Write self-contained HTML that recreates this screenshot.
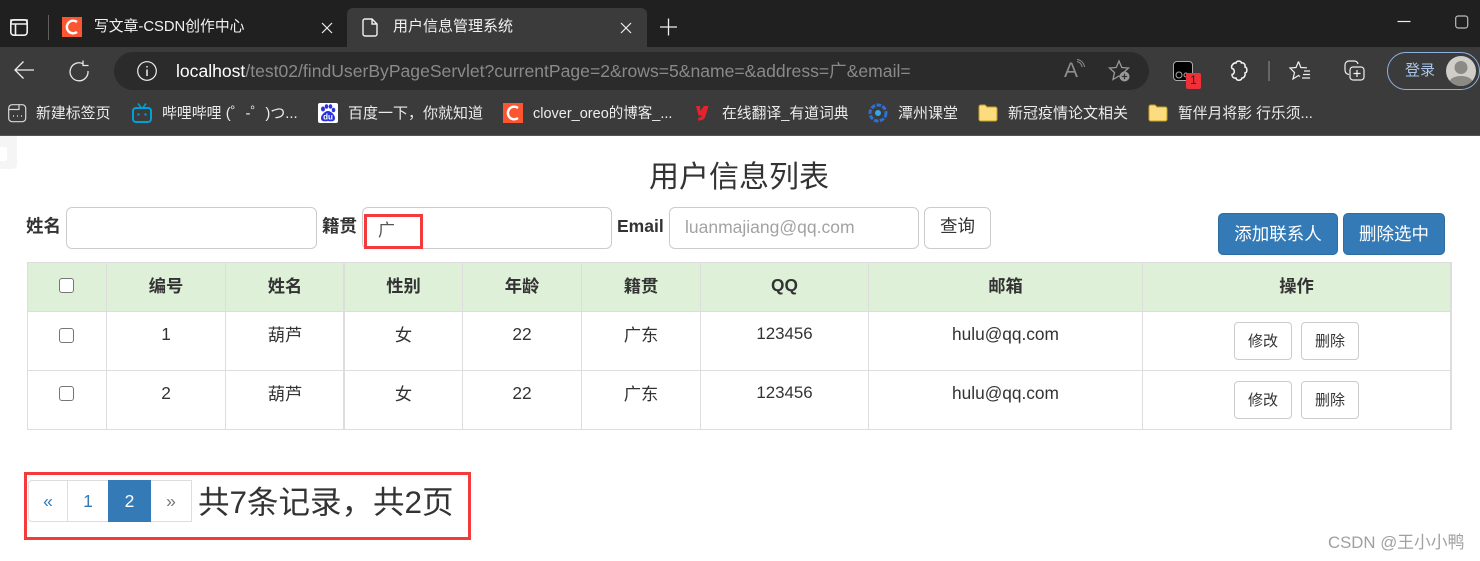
<!DOCTYPE html>
<html lang="zh-CN">
<head>
<meta charset="utf-8">
<title>用户信息管理系统</title>
<style>
*{box-sizing:border-box;margin:0;padding:0}
html,body{width:1480px;height:561px;overflow:hidden;background:#fff}
body{position:relative;font-family:"Liberation Sans","Noto Sans CJK SC",sans-serif;color:#333}
.a{position:absolute;white-space:nowrap}
.wt{color:#f2f2f2;font-size:14.8px;line-height:20px}
.bm{color:#ececec;font-size:14.9px;line-height:20px;top:104px}
svg{position:absolute;overflow:visible}
.box{position:absolute;border:1px solid #ccc;border-radius:6px;background:#fff}
.ln{position:absolute;background:#ddd}
.c{position:absolute;text-align:center;white-space:nowrap;font-size:17.3px;line-height:22px}
.th{font-weight:bold;top:275px}
.r1{top:324px}
.r2{top:383px}
.l{margin-top:-1px}
.cb{position:absolute;width:15px;height:15px;border:1px solid #767676;border-radius:3px;background:#fff;left:59px}
.sbtn{position:absolute;width:58px;height:38px;border:1px solid #ccc;border-radius:4px;background:#fff;font-size:15px;line-height:37px;text-align:center;color:#333}
.pbtn{position:absolute;height:42px;background:#fff;border:1px solid #ddd;text-align:center;line-height:41px;font-size:17.5px;color:#337ab7;top:480px}
</style>
</head>
<body>
<!-- chrome -->
<div class="a" style="left:0;top:0;width:1480px;height:136px;background:#3b3b3b"></div>
<div class="a" style="left:0;top:0;width:1480px;height:47px;background:#202020"></div>
<div class="a" style="left:347px;top:8px;width:300px;height:39px;background:#3b3b3b;border-radius:6px 6px 0 0"></div>
<div class="a" style="left:114px;top:52px;width:1035px;height:38px;background:#2b2b2b;border-radius:19px"></div>
<div class="a" style="left:0;top:135px;width:1480px;height:1px;background:#555"></div>

<svg style="left:0;top:0" width="60" height="47" fill="none" stroke="#f0f0f0">
<rect x="10.800" y="19.800" width="16.400" height="15.400" rx="3" stroke-width="1.600"/>
<path d="M11 24H27V20H11ZM15.500 24V35" stroke-width="1.600"/>
<path d="M48.500 15V40" stroke="#5f5f5f" stroke-width="1"/>
</svg>
<div class="a" style="left:62px;top:17px;width:20px;height:20px;background:#fc5531"></div>
<svg style="left:62px;top:17px" width="20" height="20" fill="none"><path d="M15 5A6.300 6.300 0 1 0 15 15" stroke="#fff" stroke-width="2.400"/></svg>
<div class="a wt" style="left:94px;top:17px">写文章-CSDN创作中心</div>
<svg style="left:322px;top:23px" width="11" height="11" stroke="#eee" stroke-width="1.200"><path d="M0 0L10 10M10 0L0 10"/></svg>
<svg style="left:362px;top:18px" width="16" height="19" fill="none" stroke="#f0f0f0" stroke-width="1.400"><path d="M2.500 1H10L15 6V16A2 2 0 0 1 13 18H3A2 2 0 0 1 1 16V3A2 2 0 0 1 2.500 1ZM10 1V6H15"/></svg>
<div class="a wt" style="left:393px;top:17px;font-size:15px">用户信息管理系统</div>
<svg style="left:621px;top:23px" width="11" height="11" stroke="#eee" stroke-width="1.200"><path d="M0 0L10 10M10 0L0 10"/></svg>
<svg style="left:660px;top:18px" width="18" height="18" stroke="#eee" stroke-width="1.300"><path d="M0 9H17M8.500 0.500V17.500"/></svg>

<svg style="left:1391px;top:15px" width="80" height="20" fill="none" stroke="#ddd"><path d="M6.500 6.500H19.500" stroke="#eee" stroke-width="1.200"/><rect x="64.700" y="1" width="12" height="12" rx="2.500" stroke-width="1.200" stroke="#bbb"/></svg>

<svg style="left:14px;top:60px" width="20" height="20" fill="none" stroke="#eee" stroke-width="1.300"><path d="M1 10H20M9.500 1.500L1 10L9.500 18.500"/></svg>
<svg style="left:69px;top:61px" width="20" height="20" fill="none" stroke="#e8e8e8" stroke-width="1.300"><path d="M14.500 3A9 9 0 1 0 19 10M14 -0.500V4.500H19.500"/></svg>
<svg style="left:137px;top:61px" width="20" height="20" fill="none" stroke="#eee" stroke-width="1.200"><circle cx="10" cy="10" r="9.300"/><path d="M10 8.500V15M10 5V6.500" stroke-width="1.500"/></svg>
<div class="a" style="left:176px;top:60px;font-size:17.57px;line-height:22px;color:#fff">localhost<span style="color:#8a8a8a">/test02/findUserByPageServlet?currentPage=2&amp;rows=5&amp;name=&amp;address=广&amp;email=</span></div>

<div class="a" style="left:1064px;top:60px;font-size:21px;line-height:22px;color:#8e8e8e">A</div>
<svg style="left:1076px;top:59px" width="10" height="12" fill="none" stroke="#8e8e8e" stroke-width="1"><path d="M1 2.500A6 6 0 0 1 6 8M1 0.500A8.500 8.500 0 0 1 8.500 8"/></svg>
<svg style="left:1108px;top:60px" width="24" height="22" fill="none"><path d="M11 1L13.800 7.500L20.500 8L15.500 12.500L17 19.500L11 16L5 19.500L6.500 12.500L1.500 8L8.200 7.500Z" stroke="#999" stroke-width="1.300"/><circle cx="16.500" cy="16.500" r="5" fill="#999"/><path d="M16.500 13.800V19.200M13.800 16.500H19.200" stroke="#333" stroke-width="1.200"/></svg>

<div class="a" style="left:1173px;top:61px;width:20px;height:20px;background:#000;border:1px solid #aaa;border-radius:4px"></div>
<svg style="left:1173px;top:61px" width="20" height="20" fill="none" stroke="#aaa"><circle cx="6" cy="14" r="3" stroke-width="1"/><circle cx="13" cy="14" r="2" stroke-width="1"/></svg>
<div class="a" style="left:1186px;top:73px;width:15px;height:16px;background:#ef3038;border-radius:2px;color:#222;font-size:11.500px;line-height:16px;text-align:center">1</div>
<svg style="left:1229px;top:60px" width="20" height="22" fill="none" stroke="#f4f4f4" stroke-width="1.500"><path d="M7 3C7.500 0.500 12 0.500 12.500 3C15 2.500 16.500 4.500 16 7C18.500 7.500 18.500 12.500 16 13C16.500 15 15.500 18 13 18C12 21 7.500 21 7 18C4.500 18.500 3 17 3 14.500C6 14 6 9 3 8.500C1.500 6 4.500 2.500 7 3Z"/></svg>
<div class="a" style="left:1268px;top:61px;width:2px;height:20px;background:#666"></div>
<svg style="left:1289px;top:60px" width="22" height="21" fill="none" stroke="#f0f0f0" stroke-width="1.200"><path d="M9.500 1.500L11.800 7.500L18 7.800M9.500 1.500L7 7.500L1 8L5.500 12.500L4 19L9.500 15.500L11 16.500M15 11H21M14 14.500H21M13 18H21"/></svg>
<svg style="left:1344px;top:60px" width="21" height="21" fill="none" stroke="#f0f0f0" stroke-width="1.200"><path d="M5 14.500C2 14 1 12 1 10V5C1 2.500 3 1 5 1H10C12 1 13.500 2 14 4"/><rect x="6" y="7" width="14" height="13" rx="3"/><path d="M13 10V17M9.500 13.500H16.500"/></svg>

<div class="a" style="left:1387px;top:52px;width:93px;height:38px;border:1.500px solid #8eb0dc;border-radius:19px"></div>
<div class="a" style="left:1405px;top:60px;font-size:15px;line-height:21px;color:#a9c5ea">登录</div>
<svg style="left:1446px;top:56px" width="30" height="30"><defs><clipPath id="av"><circle cx="15" cy="15" r="15"/></clipPath></defs><circle cx="15" cy="15" r="15" fill="#d0cec9"/><g clip-path="url(#av)" fill="#8c8a85"><circle cx="15" cy="11.500" r="6.500"/><ellipse cx="15" cy="27" rx="12" ry="7"/></g></svg>

<!-- bookmarks -->
<svg style="left:8px;top:104px" width="19" height="19" fill="none" stroke="#d8d8d8" stroke-width="1.200"><rect x=".7" y=".7" width="17" height="17" rx="3.500"/><path d="M1 5.500H11V1"/><path d="M5 12H6M9 12H10M13 12H14" stroke-width="1.600"/></svg>
<div class="a bm" style="left:36px">新建标签页</div>
<svg style="left:132px;top:103px" width="20" height="20" fill="none" stroke="#00a1d6" stroke-width="2"><rect x="1" y="5" width="18" height="14" rx="3"/><path d="M6 .500L9 4.500M14 .500L11 4.500" stroke-width="1.500"/><path d="M6.500 10.500V12.500M13.500 10.500V12.500" stroke-width="2"/></svg>
<div class="a bm" style="left:162px">哔哩哔哩 (゜-゜)つ...</div>
<div class="a" style="left:318px;top:103px;width:20px;height:20px;background:#fff;border-radius:2px"></div>
<svg style="left:318px;top:103px" width="20" height="20" fill="#2932e1"><ellipse cx="5" cy="6" rx="2" ry="2.500"/><ellipse cx="8.500" cy="3.500" rx="1.800" ry="2.300"/><ellipse cx="12.500" cy="3.500" rx="1.800" ry="2.300"/><ellipse cx="15.500" cy="7" rx="1.800" ry="2.300"/><path d="M10 8C7 8 3 12 3 15C3 19 7 18.500 10 18C13 18.500 17 19 17 15C17 12 13 8 10 8Z"/><text x="10" y="16.500" text-anchor="middle" font-size="8" font-weight="bold" fill="#fff">du</text></svg>
<div class="a bm" style="left:348px;font-size:15px">百度一下，你就知道</div>
<div class="a" style="left:503px;top:103px;width:20px;height:20px;background:#fc5531"></div>
<svg style="left:503px;top:103px" width="20" height="20" fill="none"><path d="M15 5A6.300 6.300 0 1 0 15 15" stroke="#fff" stroke-width="2.400"/></svg>
<div class="a bm" style="left:533px;font-size:14.5px">clover_oreo的博客_...</div>
<svg style="left:695px;top:105px" width="14" height="16" fill="#e8222d"><path d="M1 1H5L5.500 6L9 1H13.500L10.500 11C9.500 14.500 7 15.500 3 15.500L3.500 12.500C5.500 12.500 6.500 12 7 10.500H3.500Z"/></svg>
<div class="a bm" style="left:722px;font-size:14.8px">在线翻译_有道词典</div>
<svg style="left:868px;top:103px" width="20" height="20" fill="none"><circle cx="10" cy="10" r="8" stroke="#2f6fd6" stroke-width="3" stroke-dasharray="4.500 1.500"/><circle cx="10" cy="10" r="3" fill="#35a5e8"/></svg>
<div class="a bm" style="left:898px;font-size:15px">潭州课堂</div>
<svg style="left:978px;top:104px" width="20" height="18"><path d="M1 3C1 1.500 2 1 3 1H7L9 3H17C18.500 3 19 4 19 5V15C19 16.500 18 17 17 17H3C1.500 17 1 16 1 15Z" fill="#fbdc7f" stroke="#c7a020" stroke-width="1"/></svg>
<div class="a bm" style="left:1008px;font-size:15px">新冠疫情论文相关</div>
<svg style="left:1148px;top:104px" width="20" height="18"><path d="M1 3C1 1.500 2 1 3 1H7L9 3H17C18.500 3 19 4 19 5V15C19 16.500 18 17 17 17H3C1.500 17 1 16 1 15Z" fill="#fbdc7f" stroke="#c7a020" stroke-width="1"/></svg>
<div class="a bm" style="left:1178px;font-size:14.8px">暂伴月将影 行乐须...</div>

<!-- page -->
<div class="a" style="left:0;top:136px;width:17px;height:33px;background:#f5f5f5;border-radius:0 0 4px 0"></div>
<div class="a" style="left:0;top:147px;width:7px;height:14px;background:#fff;border-radius:0 2px 2px 0"></div>
<div class="a" style="left:649px;top:158px;font-size:30px;line-height:40px">用户信息列表</div>

<div class="a" style="left:26px;top:214px;font-size:17.5px;line-height:24px;font-weight:bold">姓名</div>
<div class="box" style="left:66px;top:207px;width:251px;height:42px"></div>
<div class="a" style="left:322px;top:214px;font-size:17.5px;line-height:24px;font-weight:bold">籍贯</div>
<div class="box" style="left:362px;top:207px;width:250px;height:42px"></div>
<div class="a" style="left:378px;top:220px;font-size:17px;line-height:22px;color:#555">广</div>
<div class="a" style="left:364px;top:214px;width:59px;height:35px;border:3px solid #f33b3b"></div>
<div class="a" style="left:617px;top:214px;font-size:17.5px;line-height:24px;font-weight:bold">Email</div>
<div class="box" style="left:669px;top:207px;width:250px;height:42px"></div>
<div class="a" style="left:685px;top:216px;font-size:17.500px;line-height:22px;color:#a3a3a3">luanmajiang@qq.com</div>
<div class="box" style="left:924px;top:207px;width:67px;height:42px;font-size:17.5px;line-height:37px;text-align:center">查询</div>
<div class="a" style="left:1218px;top:213px;width:120px;height:42px;background:#337ab7;border:1px solid #2e6da4;border-radius:5px;color:#fff;font-size:17.500px;line-height:41px;text-align:center">添加联系人</div>
<div class="a" style="left:1343px;top:213px;width:102px;height:42px;background:#337ab7;border:1px solid #2e6da4;border-radius:5px;color:#fff;font-size:17.500px;line-height:41px;text-align:center">删除选中</div>

<!-- table -->
<div class="a" style="left:27px;top:262px;width:1425px;height:50px;background:#dff0d8"></div>
<div class="ln" style="left:27px;top:262px;width:1425px;height:1px"></div>
<div class="ln" style="left:27px;top:311px;width:1425px;height:1px"></div>
<div class="ln" style="left:27px;top:370px;width:1425px;height:1px"></div>
<div class="ln" style="left:27px;top:429px;width:1425px;height:1px"></div>
<div class="ln" style="left:27px;top:262px;width:1px;height:168px"></div>
<div class="ln" style="left:106px;top:262px;width:1px;height:168px"></div>
<div class="ln" style="left:225px;top:262px;width:1px;height:168px"></div>
<div class="ln" style="left:343px;top:262px;width:2px;height:168px"></div>
<div class="ln" style="left:462px;top:262px;width:1px;height:168px"></div>
<div class="ln" style="left:581px;top:262px;width:1px;height:168px"></div>
<div class="ln" style="left:700px;top:262px;width:1px;height:168px"></div>
<div class="ln" style="left:868px;top:262px;width:1px;height:168px"></div>
<div class="ln" style="left:1142px;top:262px;width:1px;height:168px"></div>
<div class="ln" style="left:1450px;top:262px;width:2px;height:168px"></div>

<div class="cb" style="top:278px"></div>
<div class="cb" style="top:328px"></div>
<div class="cb" style="top:386px"></div>

<div class="c th" style="left:107px;width:118px">编号</div>
<div class="c th" style="left:226px;width:118px">姓名</div>
<div class="c th" style="left:345px;width:117px">性别</div>
<div class="c th" style="left:463px;width:118px">年龄</div>
<div class="c th" style="left:582px;width:118px">籍贯</div>
<div class="c th l" style="left:701px;width:167px">QQ</div>
<div class="c th" style="left:869px;width:273px">邮箱</div>
<div class="c th" style="left:1143px;width:307px">操作</div>

<div class="c r1 l" style="left:107px;width:118px">1</div>
<div class="c r1" style="left:226px;width:118px">葫芦</div>
<div class="c r1" style="left:345px;width:117px">女</div>
<div class="c r1 l" style="left:463px;width:118px">22</div>
<div class="c r1" style="left:582px;width:118px">广东</div>
<div class="c r1 l" style="left:701px;width:167px;font-size:16.9px">123456</div>
<div class="c r1 l" style="left:869px;width:273px">hulu@qq.com</div>
<div class="sbtn" style="left:1234px;top:322px">修改</div>
<div class="sbtn" style="left:1301px;top:322px">删除</div>

<div class="c r2 l" style="left:107px;width:118px">2</div>
<div class="c r2" style="left:226px;width:118px">葫芦</div>
<div class="c r2" style="left:345px;width:117px">女</div>
<div class="c r2 l" style="left:463px;width:118px">22</div>
<div class="c r2" style="left:582px;width:118px">广东</div>
<div class="c r2 l" style="left:701px;width:167px;font-size:16.9px">123456</div>
<div class="c r2 l" style="left:869px;width:273px">hulu@qq.com</div>
<div class="sbtn" style="left:1234px;top:381px">修改</div>
<div class="sbtn" style="left:1301px;top:381px">删除</div>

<!-- pagination -->
<div class="a" style="left:24px;top:472px;width:447px;height:68px;border:3px solid #f33b3b"></div>
<div class="pbtn" style="left:28px;width:40px;border-radius:4px 0 0 4px">«</div>
<div class="pbtn" style="left:67px;width:42px;border-left:1px solid #ddd">1</div>
<div class="pbtn" style="left:108px;width:43px;background:#337ab7;border-color:#337ab7;color:#fff">2</div>
<div class="pbtn" style="left:151px;width:41px;color:#777;border-left:0">»</div>
<div class="a" style="left:198px;top:483px;font-size:31.5px;line-height:38px">共7条记录，共2页</div>

<div class="a" style="left:1328px;top:532px;font-size:16.8px;line-height:22px;color:#a0a0a0">CSDN @王小小鸭</div>
</body>
</html>
